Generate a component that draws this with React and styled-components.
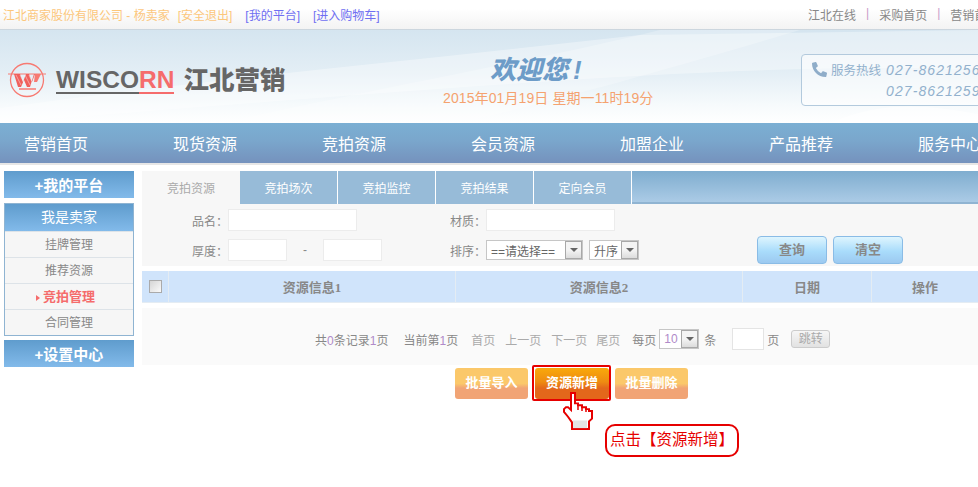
import React from 'react'
import styled, { createGlobalStyle } from 'styled-components'
import { FaPhoneAlt } from 'react-icons/fa'

const GlobalStyle = createGlobalStyle`
  html, body {
    margin: 0;
    width: 978px;
    height: 487px;
    overflow: hidden;
    background: #fff;
  }
  body {
    font-family: "Liberation Sans", "Noto Sans CJK SC", sans-serif;
    font-size: 12px;
    color: #888;
  }
`

const Page = styled.div`
  position: relative;
  width: 978px;
  height: 487px;
  overflow: hidden;
`

// top strip
const TopBar = styled.div`
  height: 29px;
  display: flex;
  align-items: center;
  justify-content: space-between;
  padding-left: 3px;
  background: linear-gradient(#fff 30%, #f3f3f3);
  border-bottom: 1px solid #ccd6de;
  white-space: nowrap;
`
const TopLeft = styled.div`
  display: flex;
  gap: 13px;
`
const Company = styled.span`
  color: #fcc77c;
  margin-right: -5px;
`
const TopLink = styled.span`
  color: ${props => props.$color || '#6f6ff2'};
`
const TopRight = styled.div`
  display: flex;
  gap: 10px;
  width: 170px;
  flex-shrink: 0;
  color: #888;
  overflow: hidden;
`
const Pipe = styled.span`
  color: #c99cc9;
`

// banner
const Banner = styled.div`
  position: relative;
  height: 93px;
  display: flex;
  align-items: flex-start;
  overflow: hidden;
  background: linear-gradient(#d5e5f0, #e3eef5 45%, #f6fafc 80%, #fff);
`
const Swoosh = styled.svg`
  position: absolute;
  inset: 0;
`
const Logo = styled.div`
  position: relative;
  display: flex;
  align-items: center;
  margin: 32px 0 0 8px;
  width: 435px;
  flex-shrink: 0;
`
const WordMark = styled.div`
  margin-left: 10px;
  font-size: 24.5px;
  line-height: 25px;
  font-weight: 700;
  color: #666;
  border-bottom: 2px solid #666;
`
const Red = styled.span`
  color: #f56c6c;
  display: inline-block;
  margin-bottom: -2px;
  border-bottom: 2px solid #f56c6c;
`
const LogoCn = styled.div`
  margin-left: 9px;
  font-size: 25.5px;
  font-weight: 900;
  line-height: 30px;
  color: #666;
`
const Welcome = styled.div`
  position: relative;
  width: 211px;
  margin-right: 147px;
  flex-shrink: 0;
  margin-top: 23px;
`
const WelcomeTitle = styled.div`
  font-size: 26px;
  line-height: 34px;
  font-weight: 900;
  font-style: italic;
  color: #6d9cc8;
  margin-left: 47px;
`
const Bang = styled.span`
  margin-left: 5px;
`
const DateLine = styled.div`
  font-size: 14px;
  line-height: 18px;
  margin-top: 2px;
  letter-spacing: 0.1px;
  color: #f5a26f;
  white-space: nowrap;
`
const Hotline = styled.div`
  position: relative;
  margin-top: 24px;
  width: 210px;
  height: 52px;
  flex-shrink: 0;
  box-sizing: border-box;
  padding: 4px 0 0 10px;
  border: 1px solid #b3cadd;
  border-radius: 4px;
  background: rgba(255, 255, 255, 0.55);
  color: #92b1cd;
`
const HotlineRow = styled.div`
  display: flex;
  align-items: center;
  height: 21px;
  white-space: nowrap;
`
const HotlineLabel = styled.span`
  font-size: 12.5px;
  margin-left: 4px;
  width: 51px;
  flex-shrink: 0;
`
const HotlineNum = styled.span`
  font-size: 14px;
  font-style: italic;
  letter-spacing: 1.1px;
  margin-left: ${props => props.$indent || 4}px;
`

// main nav
const Nav = styled.div`
  height: 40px;
  display: flex;
  align-items: center;
  gap: 85px;
  padding-left: 24px;
  overflow: hidden;
  background: linear-gradient(#7bafd3, #7aa6cc 45%, #7592bd);
  border-bottom: 2px solid #e6e6e6;
`
const NavItem = styled.div`
  flex-shrink: 0;
  width: 64px;
  font-size: 16px;
  color: #fff;
  white-space: nowrap;
`

const Body = styled.div`
  display: flex;
  gap: 8px;
  padding: 6px 0 0 4px;
`

// left column
const Side = styled.div`
  width: 130px;
  flex-shrink: 0;
  display: flex;
  flex-direction: column;
`
const SideButton = styled.div`
  height: 27px;
  line-height: 30px;
  overflow: hidden;
  text-align: center;
  font-size: 15px;
  font-weight: 700;
  color: #fff;
  background: linear-gradient(#5f9ccd, #82baea);
`
const SideBox = styled.div`
  margin: 5px 0 4px;
  height: 133px;
  box-sizing: border-box;
  border: 1px solid #8fb4d2;
  background: #f6f6f6;
`
const SideHead = styled.div`
  height: 27px;
  line-height: 27px;
  text-align: center;
  font-size: 14px;
  color: #fff;
  background: linear-gradient(#5f9ccd, #82baea);
`
const SideRow = styled.div`
  height: 26px;
  box-sizing: border-box;
  line-height: 26px;
  text-align: center;
  border-top: 1px solid #dde3e8;
  font-size: ${props => (props.$active ? 13 : 12)}px;
  font-weight: ${props => (props.$active ? 700 : 400)};
  color: ${props => (props.$active ? '#f56c6c' : '#888')};
`
const Marker = styled.i`
  display: inline-block;
  margin: 0 3px 0 -7px;
  border-left: 4px solid #f56c6c;
  border-top: 3px solid transparent;
  border-bottom: 3px solid transparent;
`

// right column
const Main = styled.div`
  flex: 1;
  min-width: 0;
`
const Tabs = styled.div`
  height: 33px;
  display: flex;
`
const Tab = styled.div`
  box-sizing: border-box;
  width: ${props => props.$w}px;
  flex-shrink: 0;
  line-height: 36px;
  text-align: center;
  color: ${props => (props.$active ? '#aaa' : '#fff')};
  background: ${props => (props.$active ? '#f7f7f7' : '#97bbd8')};
  border-right: ${props => (props.$active ? 'none' : '1px solid #fff')};
`
const TabFill = styled.div`
  flex: 1;
  box-sizing: border-box;
  background: linear-gradient(#7fadcf, #abcbe6);
  border-bottom: 2px solid #90b4d2;
`
const Filter = styled.div`
  display: grid;
  grid-template-columns: 86px 222px 36px 1fr;
  grid-template-rows: 22px 28px;
  row-gap: 5px;
  align-items: center;
  height: 62px;
  box-sizing: border-box;
  padding-top: 5px;
  background: #f7f7f7;
`
const Label = styled.label`
  color: #888;
  text-align: ${props => (props.$right ? 'right' : 'left')};
  white-space: nowrap;
`
const TextInput = styled.input`
  box-sizing: border-box;
  display: block;
  width: ${props => props.$w}px;
  height: 22px;
  padding: 0;
  border: 1px solid #ececec;
  background: #fff;
  outline: none;
`
const Cell = styled.div`
  display: flex;
  align-items: center;
`
const Dash = styled.span`
  width: 36px;
  text-align: center;
  color: #888;
`
const Select = styled.div`
  box-sizing: border-box;
  display: flex;
  justify-content: space-between;
  align-items: center;
  flex-shrink: 0;
  width: ${props => props.$w}px;
  height: 20px;
  margin-left: ${props => props.$gap || 0}px;
  padding-left: 4px;
  border: 1px solid #c6c6c6;
  background: #fff;
  color: #666;
  white-space: nowrap;
`
const SelectArrow = styled.span`
  box-sizing: border-box;
  display: flex;
  align-items: center;
  justify-content: center;
  width: 17px;
  height: 18px;
  border: 1px solid #a8a8a8;
  background: linear-gradient(#f4f4f4 50%, #dcdcdc);
  &::after {
    content: "";
    border-top: 4px solid #666;
    border-left: 4px solid transparent;
    border-right: 4px solid transparent;
  }
`
const BlueButton = styled.div`
  box-sizing: border-box;
  width: 70px;
  height: 28px;
  margin-left: ${props => props.$gap}px;
  line-height: 26px;
  text-align: center;
  font-weight: 700;
  font-size: 13px;
  color: #888;
  border: 1px solid #8abce6;
  border-radius: 4px;
  background: linear-gradient(#def5fe, #a9dcfb 55%, #9cc9f0);
`
const TableHead = styled.div`
  margin-top: 5px;
  height: 32px;
  display: grid;
  grid-template-columns: 26px 287px 287px 129px 1fr;
  background: #d0e4fb;
  box-sizing: border-box;
  border-bottom: 1px solid #e4ecf3;
`
const HeadCell = styled.div`
  display: flex;
  align-items: center;
  justify-content: center;
  font-family: "Liberation Serif", "Noto Sans CJK SC", serif;
  font-size: 13px;
  font-weight: 700;
  color: #888;
  border-left: ${props => (props.$first ? 'none' : '1px solid #e4ecf3')};
`
const Check = styled.span`
  box-sizing: border-box;
  width: 13px;
  height: 13px;
  border: 1px solid #aaa;
  background: linear-gradient(135deg, #d5d5d5, #fafafa);
`
const Pager = styled.div`
  margin-top: 5px;
  height: 57px;
  display: flex;
  align-items: center;
  padding: 5px 0 0 ${315 - 142}px;
  box-sizing: border-box;
  background: #fafafa;
  white-space: nowrap;
`
const PagerText = styled.span`
  margin-left: ${props => props.$gap || 0}px;
  color: ${props => props.$color || '#888'};
`
const Pink = styled.span`
  color: #b08ac9;
`
const PageInput = styled(TextInput)`
  margin-left: 16px;
  margin-right: 3px;
  border: 1px solid #e4e4e4;
`
const JumpButton = styled.div`
  box-sizing: border-box;
  width: 39px;
  height: 18px;
  margin-left: 12px;
  line-height: 16px;
  text-align: center;
  color: #aaa;
  border: 1px solid #ccc;
  border-radius: 3px;
  background: linear-gradient(#f6f6f6, #e2e2e2);
`

// actions under the table
const Actions = styled.div`
  position: relative;
  display: flex;
  margin-top: 3px;
  padding-left: 313px;
`
const OrangeButton = styled.div`
  box-sizing: border-box;
  width: 73px;
  height: 31px;
  margin-right: ${props => props.$gap || 0}px;
  line-height: 30px;
  text-align: center;
  font-size: 13px;
  font-weight: 700;
  color: #fff;
  border-radius: 3px;
  background: linear-gradient(#fbc86a 50%, #f1a475 65%);
`
const PrimaryButton = styled(OrangeButton)`
  position: relative;
  width: 74px;
  margin-right: 6px;
  background: linear-gradient(#f9a90a, #ee8b12 45%, #e3671b 65%);
  &::after {
    content: "";
    position: absolute;
    inset: -3px -2px -2px -3px;
    border: 2px solid #e60000;
    border-radius: 2px;
  }
`
const Hand = styled.div`
  position: absolute;
  left: 420px;
  top: 24px;
`
const Callout = styled.div`
  position: absolute;
  left: 463px;
  top: 56px;
  box-sizing: border-box;
  width: 134px;
  height: 33px;
  line-height: 28px;
  text-align: center;
  font-size: 15.5px;
  color: #e60000;
  background: #fff;
  border: 2px solid #e60000;
  border-radius: 10px;
  white-space: nowrap;
`

const navItems = ['营销首页', '现货资源', '竞拍资源', '会员资源', '加盟企业', '产品推荐', '服务中心']
const sideItems = ['挂牌管理', '推荐资源', '竞拍管理', '合同管理']
const tabs = [['竞拍资源', 98], ['竞拍场次', 98], ['竞拍监控', 98], ['竞拍结果', 98], ['定向会员', 98]]

function LogoMark() {
  return (
    <svg width="38" height="36" viewBox="0 0 38 36" fill="none">
      <circle cx="19" cy="18" r="16.5" stroke="#f77a72" strokeWidth="1.3" />
      <path d="M0 12H38" stroke="#f77a72" strokeWidth="1.2" />
      <path d="M6 12h6l3 8 3-8h3l3 8 3-8h-1l-4 13h-3l-3-7-3 7h-3z" fill="#f0605c" />
      <path d="M8 13l5 10M12 13l5 10M17 13l5 10M21 13l4 9" stroke="#fff" strokeWidth=".6" opacity=".7" />
      <path d="M27 12h6l-4 8h-3z" fill="#f77a72" />
      <path d="M11 27h17" stroke="#f77a72" strokeWidth="1.5" />
    </svg>
  )
}

function HandPointer() {
  return (
    <svg width="32" height="38" viewBox="0 0 32 40" preserveAspectRatio="none" style={{ display: 'block' }}>
      <path
        d="M9 1h4v11h3v2h4v2h4v2h3v2h3v8l-3 3v8H10v-7L6 26 2 21v-3l2-2h2l3 3z"
        fill="#fff"
        stroke="#e60000"
        strokeWidth="2"
      />
      <rect x="11" y="30" width="14" height="8" fill="#e4e4e4" />
      <path d="M16 14v5M20 16v4M24 18v3" stroke="#e60000" strokeWidth="1.5" />
    </svg>
  )
}

export default function App() {
  return (
    <Page>
      <GlobalStyle />
      <TopBar>
        <TopLeft>
          <Company>江北商家股份有限公司 - 杨卖家</Company>
          <TopLink $color="#fcc77c">[安全退出]</TopLink>
          <TopLink>[我的平台]</TopLink>
          <TopLink>[进入购物车]</TopLink>
        </TopLeft>
        <TopRight>
          <span>江北在线</span>
          <Pipe>|</Pipe>
          <span>采购首页</span>
          <Pipe>|</Pipe>
          <span>营销首页</span>
        </TopRight>
      </TopBar>

      <Banner>
        <Swoosh width="978" height="93" viewBox="0 0 978 93">
          <path d="M0 78C200 50 420 30 640 5L978 0V40C760 30 420 60 0 93z" fill="#fff" opacity=".35" />
          <path d="M220 93C420 50 560 25 660 0L800 0C700 30 560 70 460 93z" fill="#fff" opacity=".25" />
          <path d="M830 93C880 70 930 75 978 84V93z" fill="#fff" opacity=".5" />
        </Swoosh>
        <Logo>
          <LogoMark />
          <WordMark>WISCO<Red>RN</Red></WordMark>
          <LogoCn>江北营销</LogoCn>
        </Logo>
        <Welcome>
          <WelcomeTitle>欢迎您<Bang>!</Bang></WelcomeTitle>
          <DateLine>2015年01月19日 星期一11时19分</DateLine>
        </Welcome>
        <Hotline>
          <HotlineRow>
            <FaPhoneAlt size={15} color="#8fadc9" />
            <HotlineLabel>服务热线</HotlineLabel>
            <HotlineNum>027-8621256</HotlineNum>
          </HotlineRow>
          <HotlineRow>
            <HotlineNum $indent={74}>027-8621259</HotlineNum>
          </HotlineRow>
        </Hotline>
      </Banner>

      <Nav>
        {navItems.map(item => <NavItem key={item}>{item}</NavItem>)}
      </Nav>

      <Body>
        <Side>
          <SideButton>+我的平台</SideButton>
          <SideBox>
            <SideHead>我是卖家</SideHead>
            {sideItems.map((item, i) => (
              <SideRow key={item} $active={i === 2}>
                {i === 2 && <Marker />}
                {item}
              </SideRow>
            ))}
          </SideBox>
          <SideButton>+设置中心</SideButton>
        </Side>

        <Main>
          <Tabs>
            {tabs.map(([name, w], i) => (
              <Tab key={name} $w={w} $active={i === 0}>{name}</Tab>
            ))}
            <TabFill />
          </Tabs>

          <Filter>
            <Label $right>品名：</Label>
            <Cell><TextInput $w={129} /></Cell>
            <Label>材质：</Label>
            <Cell><TextInput $w={129} /></Cell>

            <Label $right>厚度：</Label>
            <Cell>
              <TextInput $w={59} />
              <Dash>-</Dash>
              <TextInput $w={59} />
            </Cell>
            <Label>排序：</Label>
            <Cell>
              <Select $w={97}>==请选择==<SelectArrow /></Select>
              <Select $w={50} $gap={6}>升序<SelectArrow /></Select>
              <BlueButton $gap={118}>查询</BlueButton>
              <BlueButton $gap={6}>清空</BlueButton>
            </Cell>
          </Filter>

          <TableHead>
            <HeadCell $first><Check /></HeadCell>
            <HeadCell>资源信息1</HeadCell>
            <HeadCell>资源信息2</HeadCell>
            <HeadCell>日期</HeadCell>
            <HeadCell>操作</HeadCell>
          </TableHead>

          <Pager>
            <PagerText>共<Pink>0</Pink>条记录<Pink>1</Pink>页</PagerText>
            <PagerText $gap={15}>当前第<Pink>1</Pink>页</PagerText>
            <PagerText $gap={13} $color="#aaa">首页</PagerText>
            <PagerText $gap={10} $color="#aaa">上一页</PagerText>
            <PagerText $gap={10} $color="#aaa">下一页</PagerText>
            <PagerText $gap={9} $color="#aaa">尾页</PagerText>
            <PagerText $gap={12}>每页</PagerText>
            <Select $w={40} $gap={3}><Pink>10</Pink><SelectArrow /></Select>
            <PagerText $gap={5}>条</PagerText>
            <PageInput $w={32} />
            <PagerText>页</PagerText>
            <JumpButton>跳转</JumpButton>
          </Pager>

          <Actions>
            <OrangeButton $gap={7}>批量导入</OrangeButton>
            <PrimaryButton>资源新增</PrimaryButton>
            <OrangeButton>批量删除</OrangeButton>
            <Hand><HandPointer /></Hand>
            <Callout>点击【资源新增】</Callout>
          </Actions>
        </Main>
      </Body>
    </Page>
  )
}
